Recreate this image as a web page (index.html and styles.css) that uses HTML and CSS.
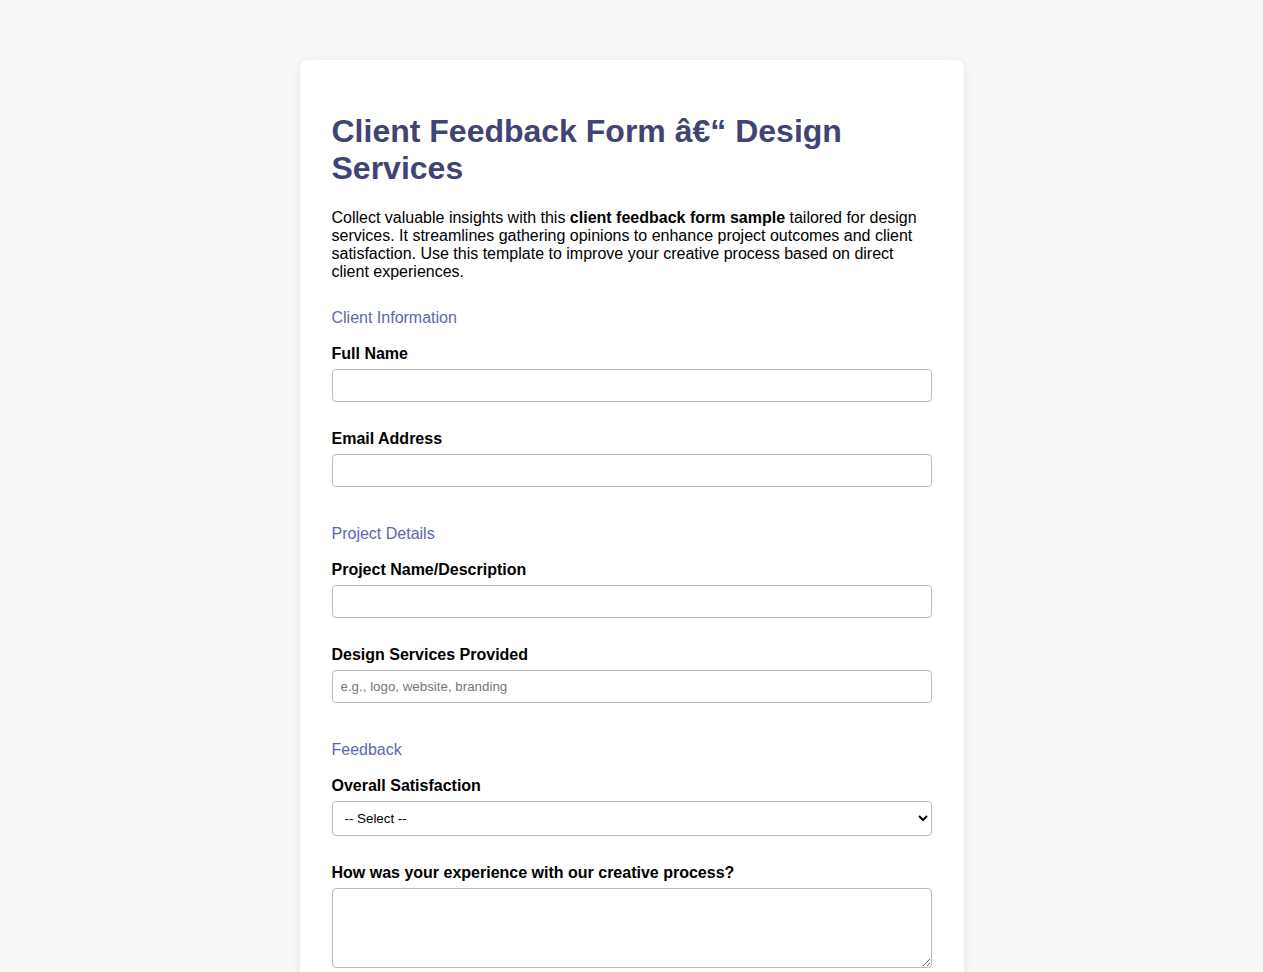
FILE: index.html
```html
<!DOCTYPE html>
<html lang="en">
<head>
<meta charset="utf-8">
<title>Client Feedback Form</title>
<link rel="stylesheet" href="styles.css">
</head>
<body>
<div class="card">
  <h1 class="title">Client Feedback Form â€“ Design Services</h1>
  <p class="intro">Collect valuable insights with this <strong>client feedback form sample</strong> tailored for design services. It streamlines gathering opinions to enhance project outcomes and client satisfaction. Use this template to improve your creative process based on direct client experiences.</p>
  <form>
    <h2 class="section">Client Information</h2>
    <div class="field">
      <label class="label">Full Name</label>
      <input class="control" type="text">
    </div>
    <div class="field">
      <label class="label">Email Address</label>
      <input class="control" type="email">
    </div>
    <h2 class="section">Project Details</h2>
    <div class="field">
      <label class="label">Project Name/Description</label>
      <input class="control" type="text">
    </div>
    <div class="field">
      <label class="label">Design Services Provided</label>
      <input class="control" type="text" placeholder="e.g., logo, website, branding">
    </div>
    <h2 class="section">Feedback</h2>
    <div class="field">
      <label class="label">Overall Satisfaction</label>
      <select class="control select"><option>-- Select --</option></select>
    </div>
    <div class="field">
      <label class="label">How was your experience with our creative process?</label>
      <textarea class="control area"></textarea>
    </div>
  </form>
</div>
</body>
</html>
```
FILE: styles.css
```css
body {
  margin: 0;
  background: #f7f7f7;
  font-family: "Liberation Sans", Arial, sans-serif;
  color: #000;
}
.card {
  max-width: 600px;
  margin: 60px auto;
  background: #fff;
  padding: 32px;
  border-radius: 8px;
  box-shadow: 0 2px 8px rgba(0,0,0,0.08);
}
.title {
  font-size: 32px;
  color: #3f4474;
  margin: 21px 0 22px;
}
.intro {
  font-size: 16px;
  line-height: 18px;
  margin: 0 0 28px;
}
.section {
  font-size: 16px;
  font-weight: normal;
  color: #5b68b0;
  margin: 0 0 18px;
}
.field {
  display: flex;
  flex-direction: column;
  margin-bottom: 28px;
}
.field:last-child { margin-bottom: 0; }
.label {
  font-weight: bold;
  font-size: 16px;
  margin-bottom: 6px;
}
.control {
  box-sizing: border-box;
  width: 100%;
  height: 33px;
  border: 1px solid #bbb;
  border-radius: 4px;
  padding: 8px;
  font-family: "Liberation Sans", Arial, sans-serif;
  font-size: 13.333px;
  background: #fff;
}
.control::placeholder { color: #777; }
.select { height: 35px; padding: 6px 8px; color: #000; }
.area { height: 80px; resize: vertical; }
.field + .section { margin-top: 38px; }
```
